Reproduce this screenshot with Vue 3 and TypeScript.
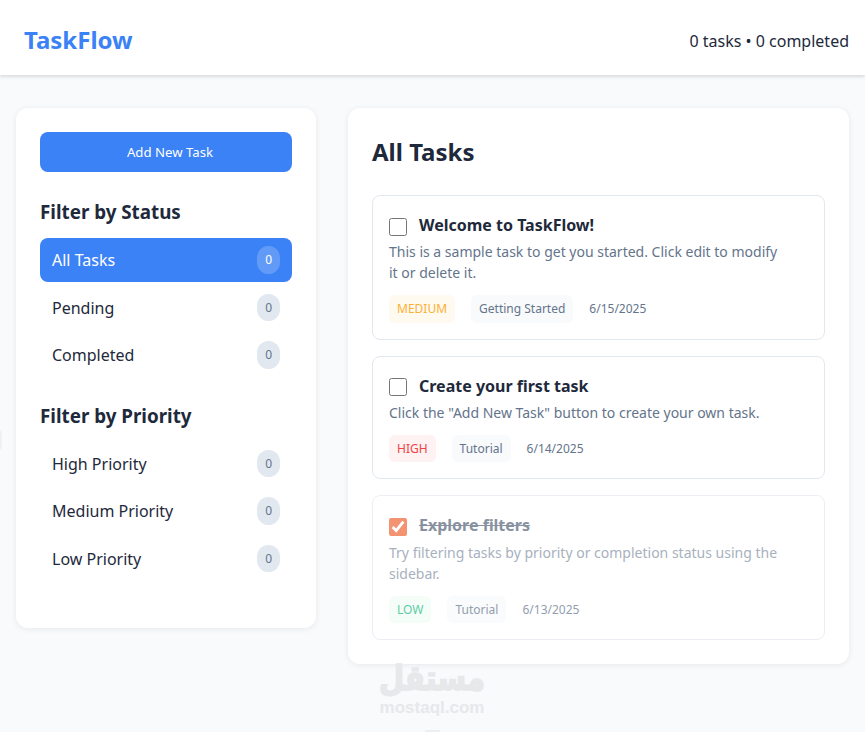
<template>
  <div class="app">
    <header class="header">
      <h1 class="logo">TaskFlow</h1>
      <div class="stats">0 tasks • 0 completed</div>
    </header>

    <div class="container">
      <aside class="sidebar">
        <button class="add-btn" type="button">Add New Task</button>

        <div v-for="group in filterGroups" :key="group.title" class="filter-group">
          <h3>{{ group.title }}</h3>
          <ul>
            <li v-for="item in group.items" :key="item" class="filter-item" :class="{ active: item === activeFilter }">
              <span class="label">{{ item }}</span>
              <span class="count">0</span>
            </li>
          </ul>
        </div>
      </aside>

      <main class="content">
        <h2>All Tasks</h2>
        <div class="task-list">
          <div v-for="task in tasks" :key="task.title" class="task" :class="{ done: task.done }">
            <div class="task-head">
              <input type="checkbox" :checked="task.done">
              <span class="task-title">{{ task.title }}</span>
            </div>
            <p class="task-desc">{{ task.description }}</p>
            <div class="task-meta">
              <span class="tag" :class="task.priority">{{ task.priority.toUpperCase() }}</span>
              <span class="tag category">{{ task.category }}</span>
              <span class="date">{{ task.date }}</span>
            </div>
          </div>
        </div>
      </main>
    </div>

    <!-- site watermark sits over the page -->
    <div class="watermark">
      <div class="wm-ar" lang="ar" dir="rtl">مستقل</div>
      <div class="wm-en">mostaql.com</div>
    </div>
    <div class="wm-edge"></div>
    <div class="wm-foot"></div>
  </div>
</template>

<script setup lang="ts">
interface Task {
  title: string
  description: string
  priority: 'low' | 'medium' | 'high'
  category: string
  date: string
  done: boolean
}

const activeFilter = 'All Tasks'

const filterGroups = [
  { title: 'Filter by Status', items: ['All Tasks', 'Pending', 'Completed'] },
  { title: 'Filter by Priority', items: ['High Priority', 'Medium Priority', 'Low Priority'] },
]

const tasks: Task[] = [
  {
    title: 'Welcome to TaskFlow!',
    description: 'This is a sample task to get you started. Click edit to modify it or delete it.',
    priority: 'medium',
    category: 'Getting Started',
    date: '6/15/2025',
    done: false,
  },
  {
    title: 'Create your first task',
    description: 'Click the "Add New Task" button to create your own task.',
    priority: 'high',
    category: 'Tutorial',
    date: '6/14/2025',
    done: false,
  },
  {
    title: 'Explore filters',
    description: 'Try filtering tasks by priority or completion status using the sidebar.',
    priority: 'low',
    category: 'Tutorial',
    date: '6/13/2025',
    done: true,
  },
]
</script>

<style>
body {
  margin: 0;
  background: #f8fafc;
}
</style>

<style scoped>
.app {
  position: relative;
  height: 732px;
  overflow: hidden;
  font-family: "Noto Sans", "Liberation Sans", sans-serif;
  line-height: 1.6;
  color: #1e293b;
  background: #f8fafc;
}

.header {
  display: flex;
  justify-content: space-between;
  align-items: center;
  box-sizing: border-box;
  height: 75px;
  padding: 6px 16px 0 24px;
  background: #fff;
  box-shadow: 0 2px 3px rgba(0, 0, 0, 0.12);
}

.logo {
  margin: 0;
  font-size: 24px;
  font-weight: 700;
  color: #3b82f6;
}

.stats {
  margin-top: 2px;
  font-size: 16px;
}

.container {
  display: grid;
  grid-template-columns: 300px 501px;
  gap: 32px;
  align-items: start;
  padding: 33px 16px 0;
}

.sidebar,
.content {
  padding: 24px;
  background: #fff;
  border-radius: 12px;
  box-shadow: 0 1px 6px rgba(0, 0, 0, 0.08);
}

.sidebar {
  height: 520px;
  box-sizing: border-box;
}

.add-btn {
  display: block;
  width: 100%;
  height: 40px;
  padding: 0 0 0 8px;
  margin-bottom: 24px;
  border: none;
  border-radius: 8px;
  background: #3b82f6;
  color: #fff;
  font-family: inherit;
  font-size: 13.2px;
}

.filter-group {
  margin-bottom: 22.5px;
}

.filter-group h3 {
  margin: 0 0 10px;
  font-size: 18.8px;
  font-weight: 700;
  line-height: 32px;
}

.filter-group ul {
  margin: 0;
  padding: 0;
  list-style: none;
}

.filter-item {
  display: flex;
  justify-content: space-between;
  align-items: center;
  height: 44px;
  padding: 0 12px;
  margin-bottom: 3.5px;
  border-radius: 8px;
}

.filter-item.active {
  background: #3b82f6;
  color: #fff;
}

.label {
  margin-top: 2px;
}

.count {
  padding: 4px 8px;
  border-radius: 12px;
  background: #e2e8f0;
  color: #64748b;
  font-size: 12px;
}

.active .count {
  background: rgba(255, 255, 255, 0.2);
  color: #fff;
}

.content h2 {
  margin: 0 0 24px;
  font-size: 24px;
  font-weight: 700;
  line-height: 39px;
}

.task-list {
  display: flex;
  flex-direction: column;
  gap: 16px;
}

.task {
  padding: 16px;
  border: 1px solid #e2e8f0;
  border-radius: 8px;
}

.task.done {
  opacity: 0.7;
}

.task-head {
  display: flex;
  align-items: flex-start;
  gap: 12px;
  margin-bottom: 3.4px;
}

.task-head input {
  width: 18px;
  height: 18px;
  margin: 5.6px 0 0;
  accent-color: #ee6637;
}

.task-title {
  font-size: 16px;
  font-weight: 700;
  line-height: 26px;
}

.done .task-title {
  text-decoration: line-through;
  color: #556378;
}

.task-desc {
  max-width: 396px;
  margin: 0 0 12px;
  font-size: 14px;
  line-height: 21px;
  color: #64748b;
}

.done .task-desc {
  color: #8390a4;
}

.task-meta {
  display: flex;
  align-items: center;
  gap: 16px;
  font-size: 12px;
  color: #64748b;
}

.tag {
  padding: 4px 8px;
  border-radius: 6px;
}

.medium {
  background: #fffaf0;
  color: #fbb034;
}

.high {
  background: #fef2f2;
  color: #ef4444;
}

.low {
  background: #f0fdf4;
  color: #10b981;
}

.category {
  background: #f8fafc;
}

.watermark {
  position: absolute;
  left: 373px;
  top: 656px;
  width: 118px;
  text-align: center;
  color: #e6e8ea;
  font-weight: 700;
}

.wm-ar {
  font-family: "DejaVu Sans", sans-serif;
  font-size: 29px;
  line-height: 44px;
  -webkit-text-stroke: 1.4px #e6e8ea;
  transform: scaleY(1.2);
}

.wm-en {
  font-family: "Liberation Sans", sans-serif;
  font-size: 17px;
  line-height: 16px;
}

.wm-edge {
  position: absolute;
  left: 0;
  top: 430px;
  width: 2px;
  height: 20px;
  border-radius: 0 2px 2px 0;
  background: #f0f1f3;
}

.wm-foot {
  position: absolute;
  left: 425px;
  top: 730px;
  width: 15px;
  height: 2px;
  background: #eceef0;
}
</style>
